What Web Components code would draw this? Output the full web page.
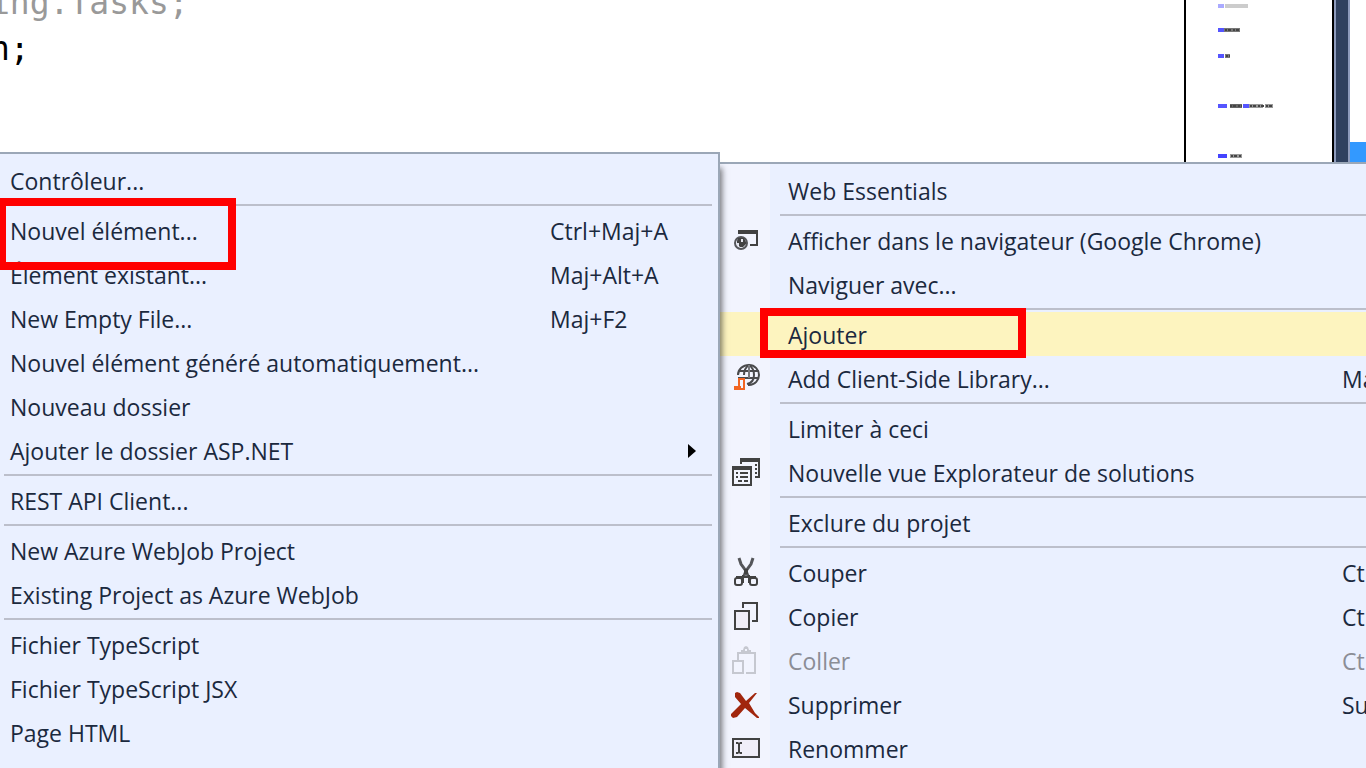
<!DOCTYPE html>
<html lang="fr">
<head>
<meta charset="utf-8">
<title>Explorateur de solutions - Ajouter</title>
<style>
html,body{margin:0;height:100%;overflow:hidden;background:#fff}
body{font-family:"Open Sans","Noto Sans",sans-serif}
</style>
</head>
<body>
<ide-window></ide-window>

<template id="t-window">
<style>
:host{display:block;position:relative;height:100%;overflow:hidden;background:#fff}
.workspace{display:flex;height:100%}
code-pane{flex:1;min-width:0}
.main{position:absolute;z-index:1;top:162px;left:720px;right:-150px;min-height:100%}
.sub{position:absolute;z-index:2;top:152px;left:-2px;width:722px;min-height:100%;box-sizing:border-box}
mark-frame{position:absolute;z-index:3}
.m1{left:-2px;top:198px;width:238px;height:72px}
.m2{left:760px;top:308px;width:266px;height:50px}
</style>
<div class="workspace">
  <code-pane></code-pane>
  <mini-map></mini-map>
  <side-dock></side-dock>
</div>
<menu-panel class="main" gutter label="Menu contextuel">
  <menu-item>Web Essentials</menu-item>
  <menu-line></menu-line>
  <menu-item icon="browser">Afficher dans le navigateur (Google Chrome)</menu-item>
  <menu-item>Naviguer avec...</menu-item>
  <menu-line></menu-line>
  <menu-item active>Ajouter</menu-item>
  <menu-item icon="library" keys="Maj+Alt+L">Add Client-Side Library...</menu-item>
  <menu-line></menu-line>
  <menu-item>Limiter à ceci</menu-item>
  <menu-item icon="views">Nouvelle vue Explorateur de solutions</menu-item>
  <menu-line></menu-line>
  <menu-item>Exclure du projet</menu-item>
  <menu-line></menu-line>
  <menu-item icon="cut" keys="Ctrl+X">Couper</menu-item>
  <menu-item icon="copy" keys="Ctrl+C">Copier</menu-item>
  <menu-item icon="paste" keys="Ctrl+V" disabled>Coller</menu-item>
  <menu-item icon="remove" keys="Suppr">Supprimer</menu-item>
  <menu-item icon="rename">Renommer</menu-item>
</menu-panel>
<menu-panel class="sub" label="Ajouter">
  <menu-item>Contrôleur...</menu-item>
  <menu-line></menu-line>
  <menu-item keys="Ctrl+Maj+A">Nouvel élément...</menu-item>
  <menu-item keys="Maj+Alt+A">Élément existant...</menu-item>
  <menu-item keys="Maj+F2">New Empty File...</menu-item>
  <menu-item>Nouvel élément généré automatiquement...</menu-item>
  <menu-item>Nouveau dossier</menu-item>
  <menu-item submenu>Ajouter le dossier ASP.NET</menu-item>
  <menu-line></menu-line>
  <menu-item>REST API Client...</menu-item>
  <menu-line></menu-line>
  <menu-item>New Azure WebJob Project</menu-item>
  <menu-item>Existing Project as Azure WebJob</menu-item>
  <menu-line></menu-line>
  <menu-item>Fichier TypeScript</menu-item>
  <menu-item>Fichier TypeScript JSX</menu-item>
  <menu-item>Page HTML</menu-item>
</menu-panel>
<mark-frame class="m1"></mark-frame>
<mark-frame class="m2"></mark-frame>
</template>

<script>
const define = (name, html, setup) => customElements.define(name, class extends HTMLElement {
  constructor() {
    super();
    this.attachShadow({ mode: 'open' }).innerHTML = html;
  }
  connectedCallback() { if (setup) setup(this, this.shadowRoot); }
});

const icons = {
  browser: '<path fill="#424242" d="M6 4h20v16h-8v-2h6V8H6z"/><circle cx="9" cy="17" r="6" fill="#f2f4fe" stroke="#55565a" stroke-width="2"/><path fill="#424242" d="M6 12h6l2 4v2l-3 3H8l-2-2H5v-4z"/><path fill="#e4e5ee" d="M9 13h2v3H9zM5 17h2v3H5z"/>',
  library: '<g fill="none" stroke="#4a4a4c" stroke-width="2"><path d="M6 11C6 5 11 1 17 1s10 5 10 10-4 10-10 10h-1"/><path d="M15 20c5-1 7-5 7-9S20 3 17 1c-3 2-5 5-5 10M7 7h20M6 14h21" /><path d="M17 1v13" stroke="#77787c"/></g><path d="M6 15h6v10h-4M7 14v9H3v2h5v-3" fill="none" stroke="#f26522" stroke-width="2"/>',
  views: '<path fill="#424242" d="M8 0h20v20h-5v-2h3V4H10v2H8zM0 8h20v20H0zm2 4v14h16V12z"/><path fill="#424242" d="M4 14h2v2H4zm4 0h8v2H8zm-4 4h2v2H4zm4 0h8v2H8zm-2 4h4v2H6zm6 0h4v2h-4zM23 6h2v2h-2zm0 4h2v2h-2zm0 4h2v2h-2z"/>',
  cut: '<path d="m7 0 2 6 5 7 2 5M21 0l-2 6-5 7-2 5" fill="none" stroke="#55565a" stroke-width="3"/><path d="M12 11h4v5h-4z" fill="#424242"/><g fill="none" stroke="#424242" stroke-width="2"><rect x="3" y="20" width="7" height="7" rx="2"/><rect x="18" y="20" width="7" height="7" rx="2"/><path d="M4 19h20M11 17v8M17 17v8"/></g>',
  copy: '<path d="M11 6V1h14v18h-5" fill="none" stroke="#424242" stroke-width="2"/><path d="M3 9h14v18H3z" fill="#f0eef8" stroke="#424242" stroke-width="2"/>',
  paste: '<g fill="none" stroke="#c6c8d0" stroke-width="2"><path d="M1 15h10v12H1zM6 14V7h17v20h-9"/></g><path fill="#c6c8d0" d="M9 4h2l1-3 2-1 2 1 1 3h2v4H9zm4-1v2h2V3z"/>',
  remove: '<path fill="#a1260d" d="M3 3l2-1 3 1 6 8 9-8 2 0-8 10 6 10 4 4v1h-2L13 18l-8 9-4 1-2-2 0-2 10-10L3 7z"/>',
  rename: '<path d="M1 5h26v18H1z" fill="#f0eef8" stroke="#424242" stroke-width="2"/><path d="M4 8h2l1 1 1-1h2v2H8v8h2v2H8l-1-1-1 1H4v-2h2v-8H4z" fill="#424242"/>'
};

define('code-pane', `<style>
:host{display:block;overflow:hidden}
pre{margin:-20px 0 0 -10px;font:33px/46px "DejaVu Sans Mono",monospace;color:#000}
.dim{color:#999}
</style><pre><span class="dim">ing.Tasks;</span>
n;</pre>`);

define('mini-map', `<style>
:host{display:block;width:146px;border:solid #000;border-width:0 2px;background:#fff}
svg{display:block;filter:blur(.6px)}
</style><svg width="146" height="170" viewBox="1186 0 146 170" aria-hidden="true">
<g stroke-width="4">
<path stroke="#aaf" d="M1218 6h6"/><path stroke="#ccc" d="M1225 6h23"/>
<path stroke="#55f" d="M1218 30h6"/><path stroke="#777" d="M1224 30h16"/>
<path stroke="#55f" d="M1218 56h6"/><path stroke="#777" d="M1225 56h5"/>
<path stroke="#55f" d="M1218 106h9M1243 106h6"/><path stroke="#666" d="M1230 106h12"/><path stroke="#999" d="M1249 106h14M1265 106h8"/>
<path stroke="#44f" d="M1218 156h9"/><path stroke="#999" d="M1230 156h12"/>
</g>
<path stroke="#444" stroke-width="2" stroke-dasharray="2 1 3 2" d="M1225 30h15M1226 56h4M1230 106h12M1250 106h22M1231 156h10"/>
</svg>`);

define('side-dock', `<style>
:host{display:flex;width:32px}
.bar{width:12px;background:#30415f;border:solid #8e9bbc;border-width:0 2px}
.list{flex:1;background:#fff}
.sel{margin-top:142px;height:30px;background:#3399ff}
</style><div class="bar"></div><div class="list"><div class="sel"></div></div>`);

define('mark-frame', `<style>
:host{display:block;box-sizing:border-box;border:8px solid #f00;pointer-events:none}
</style>`);

define('menu-line', `<style>
:host{display:block;height:2px;margin:2px var(--line-end,6px) 2px var(--line-start,4px);background:#bcbfcb}
</style>`);

define('menu-panel', `<style>
:host{display:block;border:2px solid #9ba7b7;background:#eaf0ff}
:host(:not([gutter])){box-shadow:4px 14px 6px -2px #0008}
:host([gutter]){border-width:2px 0 0;--line-start:60px;--text-start:68px;--keys-width:174px;background:linear-gradient(90deg,#f2f4fe 50px,#eaf0ff 50px)}
nav{display:block;padding-top:4px}
</style><nav><slot></slot></nav>`, (el, root) => {
  root.querySelector('nav').setAttribute('aria-label', el.getAttribute('label'));
});

define('menu-item', `<style>
:host{display:block}
button{position:relative;display:flex;align-items:center;width:100%;height:44px;margin:0;border:0;background:none;
  padding:2px 0 0 var(--text-start,10px);font:23px/32px "Open Sans","Noto Sans",sans-serif;color:#1b293e;text-align:left;white-space:nowrap}
:host([active]) button{background:#fdf4bf}
:host([disabled]) button{color:#8b8d96}
.text{flex:1}
.keys{width:var(--keys-width,168px)}
svg{position:absolute;left:12px;top:8px;overflow:visible}
.arrow{position:absolute;right:22px;top:16px;width:0;border:7px solid transparent;border-left:8px solid #000;border-right:0}
</style><button type="button"><span class="text"><slot></slot></span></button>`, (el, root) => {
  const b = root.querySelector('button');
  b.disabled = el.hasAttribute('disabled');
  const icon = el.getAttribute('icon');
  if (icon) b.insertAdjacentHTML('afterbegin', `<svg width="28" height="28" viewBox="0 0 28 28" aria-hidden="true">${icons[icon]}</svg>`);
  if (el.hasAttribute('keys')) b.insertAdjacentHTML('beforeend', `<span class="keys">${el.getAttribute('keys')}</span>`);
  if (el.hasAttribute('submenu')) b.insertAdjacentHTML('beforeend', '<span class="arrow"></span>');
});

customElements.define('ide-window', class extends HTMLElement {
  constructor() {
    super();
    this.attachShadow({ mode: 'open' }).append(document.getElementById('t-window').content.cloneNode(true));
  }
});
</script>
</body>
</html>
